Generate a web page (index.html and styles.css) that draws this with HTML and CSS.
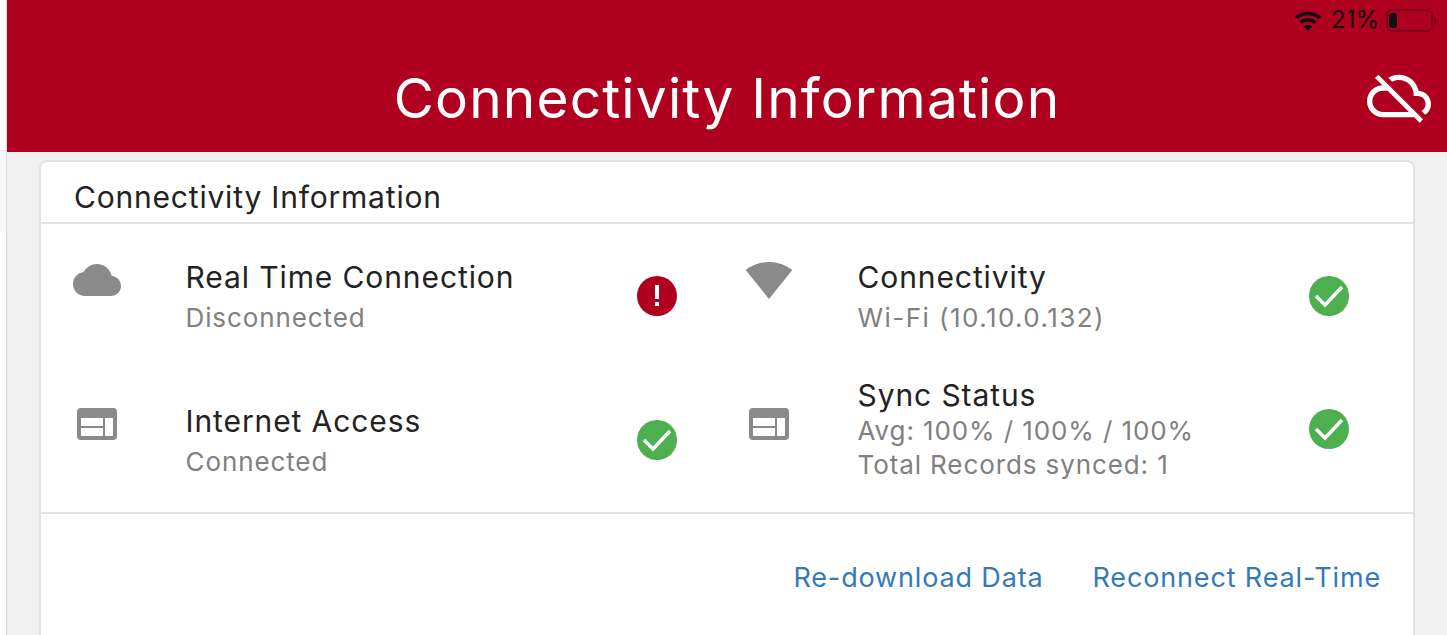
FILE: index.html
```html
<!DOCTYPE html>
<html lang="en">
<head>
    <meta charset="UTF-8">
    <meta name="viewport" content="width=device-width, initial-scale=1.0">
    <title>Connectivity Information</title>
    <link rel="stylesheet" href="styles.css">
</head>
<body>
    <div class="rail"><div class="rail-top"></div><div class="rail-mid"></div></div>
    <div class="page">
        <div class="header">
            <div class="status-bar">
                <svg class="status-wifi" viewBox="0 0 28 20">
                    <path d="M14 20l-4.2-4.6c2.4-2 6-2 8.4 0z"/>
                    <path d="M7.6 13L5.3 10.5c5-4.3 12.400-4.300 17.400 0L20.400 13c-3.700-3.100-9.100-3.100-12.800 0z"/>
                    <path d="M3.200 8.200L.9 5.700c7.500-6.600 18.700-6.600 26.200 0l-2.300 2.500c-6.200-5.400-15.400-5.400-21.600 0z"/>
                </svg>
                <span class="status-pct">21%</span>
                <div class="battery"><div class="battery-level"></div></div>
                <div class="battery-tip"></div>
            </div>
            <div class="title-row">
                <h1 class="page-title">Connectivity Information</h1>
                <svg class="cloud-off" viewBox="0 0 24 24"><path d="M19.35 10.04C18.67 6.59 15.64 4 12 4c-1.48 0-2.85.43-4.01 1.17l1.46 1.46C10.21 6.23 11.08 6 12 6c3.04 0 5.5 2.46 5.5 5.5v.5H19c1.66 0 3 1.34 3 3 0 1.13-.64 2.11-1.56 2.62l1.45 1.45C23.16 18.16 24 16.68 24 15c0-2.64-2.05-4.78-4.65-4.96zM3 5.27l2.75 2.74C2.56 8.15 0 10.77 0 14c0 3.31 2.69 6 6 6h11.730l2 2L21 20.730 4.270 4 3 5.270zM7.730 10l8 8H6c-2.210 0-4-1.790-4-4s1.790-4 4-4h1.730z"/></svg>
            </div>
        </div>

        <div class="card">
            <div class="card-title">Connectivity Information</div>
            <div class="card-body">
                <div class="item">
                    <svg class="item-icon" viewBox="0 0 24 24"><path d="M19.35 10.04C18.67 6.59 15.64 4 12 4 9.11 4 6.6 5.64 5.35 8.04 2.34 8.36 0 10.91 0 14c0 3.31 2.69 6 6 6h13c2.76 0 5-2.24 5-5 0-2.64-2.05-4.78-4.65-4.96z"/></svg>
                    <div class="item-text">
                        <div class="item-name">Real Time Connection</div>
                        <div class="item-sub">Disconnected</div>
                    </div>
                    <svg class="item-status" viewBox="0 0 40 40">
                        <circle class="dot-red" cx="20" cy="20" r="20"/>
                        <rect class="mark" x="18" y="9" width="4" height="14"/>
                        <rect class="mark" x="18" y="26" width="4" height="4"/>
                    </svg>
                </div>
                <div class="item">
                    <svg class="item-icon" viewBox="0 0 24 24"><path d="M12.01 21.49L23.64 7c-.45-.34-4.93-4-11.64-4C5.28 3 .81 6.66.36 7l11.63 14.49.01.01.01-.01z"/></svg>
                    <div class="item-text">
                        <div class="item-name">Connectivity</div>
                        <div class="item-sub item-sub-wide">Wi-Fi (10.10.0.132)</div>
                    </div>
                    <svg class="item-status" viewBox="0 0 40 40">
                        <circle class="dot-green" cx="20" cy="20" r="20"/>
                        <path class="tick" d="M7 20l9 9 17-18"/>
                    </svg>
                </div>
                <div class="item">
                    <svg class="item-icon" viewBox="0 0 48 48">
                        <rect x="4" y="8" width="40" height="32" rx="4"/>
                        <rect class="mark" x="8" y="18" width="22" height="8"/>
                        <rect class="mark" x="8" y="28" width="22" height="8"/>
                        <rect class="mark" x="32" y="18" width="8" height="18"/>
                    </svg>
                    <div class="item-text">
                        <div class="item-name">Internet Access</div>
                        <div class="item-sub">Connected</div>
                    </div>
                    <svg class="item-status" viewBox="0 0 40 40">
                        <circle class="dot-green" cx="20" cy="20" r="20"/>
                        <path class="tick" d="M7 20l9 9 17-18"/>
                    </svg>
                </div>
                <div class="item item-dense">
                    <svg class="item-icon" viewBox="0 0 48 48">
                        <rect x="4" y="8" width="40" height="32" rx="4"/>
                        <rect class="mark" x="8" y="18" width="22" height="8"/>
                        <rect class="mark" x="8" y="28" width="22" height="8"/>
                        <rect class="mark" x="32" y="18" width="8" height="18"/>
                    </svg>
                    <div class="item-text">
                        <div class="item-name">Sync Status</div>
                        <div class="item-sub">Avg: 100% / 100% / 100%</div>
                        <div class="item-sub">Total Records synced: 1</div>
                    </div>
                    <svg class="item-status" viewBox="0 0 40 40">
                        <circle class="dot-green" cx="20" cy="20" r="20"/>
                        <path class="tick" d="M7 20l9 9 17-18"/>
                    </svg>
                </div>
            </div>
            <div class="card-actions">
                <a class="action" href="#">Re-download Data</a>
                <a class="action" href="#">Reconnect Real-Time</a>
            </div>
        </div>
    </div>
</body>
</html>
```

FILE: styles.css
```css
body {
    margin: 0;
    height: 635px;
    overflow: hidden;
    display: flex;
    font-family: Inter, "Liberation Sans", sans-serif;
    background-color: #fff;
}

/* Sliver of the page behind, on the left edge */
.rail {
    width: 6px;
    flex-shrink: 0;
    border-right: 1px solid #d9d9d9;
    background-color: #fff;
}

.rail-top {
    height: 150px;
    border-bottom: 1px solid #e6e6e6;
}

.rail-mid {
    height: 81px;
    background-color: #f8f8f8;
}

.page {
    flex: 1;
    min-width: 0;
    background-color: #f0f0f0;
}

.header {
    height: 152px;
    background-color: #b00020;
}

.status-bar {
    height: 41px;
    display: flex;
    align-items: center;
    justify-content: flex-end;
    padding-right: 10px;
    color: #111;
}

.status-wifi {
    width: 28px;
    height: 20px;
    margin-right: 9px;
    fill: #111;
}

.status-pct {
    font-size: 24px;
    line-height: 38px;
    margin-bottom: 2px;
    margin-right: 7px;
}

.battery {
    width: 47px;
    height: 23px;
    box-sizing: border-box;
    border: 2px solid #7e0017;
    border-radius: 6px;
    padding: 2px 1px;
}

.battery-level {
    width: 8px;
    height: 100%;
    background-color: #111;
    border-radius: 3px;
}

.battery-tip {
    width: 3px;
    height: 8px;
    margin-left: 1px;
    background-color: #7e0017;
    border-radius: 0 3px 3px 0;
}

.title-row {
    display: flex;
    align-items: center;
    justify-content: center;
    position: relative;
    height: 111px;
}

.page-title {
    margin: 2px 0 0 0;
    font-size: 55px;
    font-weight: 400;
    color: #fff;
    letter-spacing: 1.15px;
}

/* Sits over the header on the right, title stays centred */
.cloud-off {
    position: absolute;
    right: 16px;
    top: 23px;
    width: 64px;
    height: 64px;
    fill: #fff;
}

.card {
    margin: 8px 32px 0 32px;
    height: 600px;
    background-color: #fff;
    border: 2px solid #e2e2e2;
    border-radius: 8px;
    box-sizing: border-box;
}

.card-title {
    height: 62px;
    box-sizing: border-box;
    padding: 17px 0 0 33px;
    font-size: 30px;
    line-height: 36px;
    letter-spacing: 0.8px;
    color: #222;
    border-bottom: 2px solid #e2e2e2;
}

.card-body {
    display: grid;
    grid-template-columns: 672px 1fr;
    grid-template-rows: 144px 144px;
    padding-left: 32px;
    border-bottom: 2px solid #e2e2e2;
}

.item {
    display: flex;
    align-items: flex-start;
}

.item-icon {
    width: 48px;
    height: 48px;
    margin: 32px 64.5px 0 0;
    flex-shrink: 0;
    fill: #8a8a8a;
}

.item-text {
    width: 451.5px;
    flex-shrink: 0;
    padding-top: 35px;
}

.item-name {
    font-size: 30px;
    line-height: 36px;
    letter-spacing: 0.9px;
    color: #222;
    margin-bottom: 6px;
}

.item-sub {
    font-size: 26px;
    line-height: 34px;
    letter-spacing: 0.9px;
    color: #808080;
}

/* Digits run wider on the address line */
.item-sub-wide {
    letter-spacing: 1.45px;
}

.item-status {
    width: 40px;
    height: 40px;
    flex-shrink: 0;
    margin-top: 52px;
}

/* Three lines of text, sits higher in the row than its neighbour */
.item-dense .item-text {
    padding-top: 9px;
}

.item-dense .item-name {
    margin-bottom: 1px;
}

.item-dense .item-status {
    margin-top: 41px;
}

.dot-red {
    fill: #b00020;
}

.dot-green {
    fill: #4caf50;
}

.mark {
    fill: #fff;
}

.tick {
    fill: none;
    stroke: #fff;
    stroke-width: 3.5;
}

.card-actions {
    display: flex;
    justify-content: flex-end;
    gap: 49px;
    padding: 47px 32px 0 0;
}

.action {
    font-size: 27px;
    line-height: 34px;
    letter-spacing: 0.85px;
    color: #337ab7;
    text-decoration: none;
}
```
